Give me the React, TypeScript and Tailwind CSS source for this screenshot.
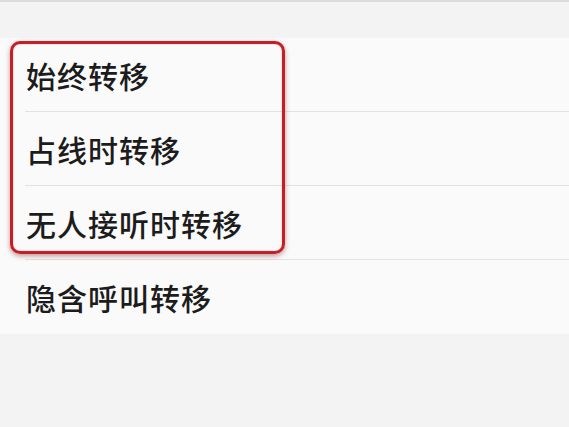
import React from "react";

const items = ["始终转移", "占线时转移", "无人接听时转移", "隐含呼叫转移"];

export default function App() {
  return (
    <div
      className="relative w-[569px] h-[427px] overflow-hidden bg-[#f3f3f3] border-t-2 border-[#dcdcdc]"
      style={{ fontFamily: '"Noto Sans CJK SC", "Noto Sans", sans-serif' }}
    >
      <div className="h-[36px]" />
      <ul className="bg-[#fafafa]">
        {items.map((label, i) => (
          <li key={label} className="relative h-[74px] flex items-center pl-[26px]">
            <span className="text-[30px] leading-none font-medium text-[#1c1c1c] tracking-[1px]">{label}</span>
            {i < items.length - 1 && (
              <div className="absolute left-[25px] right-0 bottom-0 h-px bg-[#e2e2e2]" />
            )}
          </li>
        ))}
      </ul>

      {/* highlight frame around the first three options */}
      <div className="absolute left-[10px] top-[39px] w-[275px] h-[213px] rounded-[10px] border-[3.5px] border-[#c41f27] shadow-[0_2px_5px_rgba(110,0,0,0.4),inset_0_0_2px_rgba(150,0,0,0.3)]" />
    </div>
  );
}
